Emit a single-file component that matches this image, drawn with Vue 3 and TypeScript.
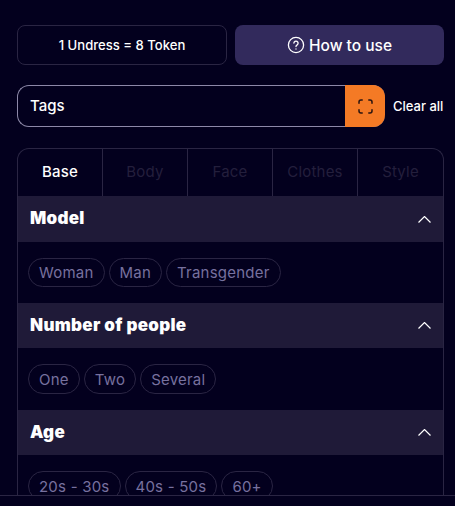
<script setup lang="ts">
interface Section { title: string; chips: string[] }
const tabs: string[] = ['Base', 'Body', 'Face', 'Clothes', 'Style']
const sections: Section[] = [
  { title: 'Model', chips: ['Woman', 'Man', 'Transgender'] },
  { title: 'Number of people', chips: ['One', 'Two', 'Several'] },
  { title: 'Age', chips: ['20s - 30s', '40s - 50s', '60+'] },
]
</script>

<template>
  <div class="page">
    <div class="top">
      <div class="price">1 Undress = 8 Token</div>
      <button class="how">
        <svg width="18" height="18" viewBox="0 0 18 18" fill="none" stroke="#fff" stroke-width="1.3" stroke-linecap="round">
          <circle cx="9" cy="9" r="7.6" />
          <path d="M6.9 7.1a2.1 2.1 0 1 1 3.3 1.8c-.8.5-1.2.9-1.2 1.7" />
          <path d="M9 12.9v.1" />
        </svg>
        How to use
      </button>
    </div>
    <div class="search">
      <div class="field">
        <span class="label">Tags</span>
        <span class="scan">
          <svg width="15" height="15" viewBox="0 0 15 15" fill="none" stroke="#2a1410" stroke-width="1.5" stroke-linecap="round" stroke-linejoin="round">
            <path d="M1 4.200V3a2 2 0 0 1 2-2h1.200M10.800 1H12a2 2 0 0 1 2 2v1.200M14 10.800V12a2 2 0 0 1-2 2h-1.200M4.200 14H3a2 2 0 0 1-2-2v-1.200" />
          </svg>
        </span>
      </div>
      <span class="clear">Clear all</span>
    </div>
    <div class="panel">
      <div class="tabs">
        <div v-for="(t, i) in tabs" :key="t" class="tab" :class="{ active: i === 0 }">{{ t }}</div>
      </div>
      <section v-for="s in sections" :key="s.title">
        <header class="head">
          <span>{{ s.title }}</span>
          <svg width="13" height="7" viewBox="0 0 13 7" fill="none" stroke="#fff" stroke-width="1.2">
            <path d="M.5 6.500l6-6 6 6" />
          </svg>
        </header>
        <div class="chips">
          <span v-for="c in s.chips" :key="c" class="chip">{{ c }}</span>
        </div>
      </section>
    </div>
    <div class="bar"></div>
  </div>
</template>

<style>
html, body { margin: 0; background: #03001e; }
</style>

<style scoped>
.page {
  position: relative;
  width: 455px;
  height: 506px;
  overflow: hidden;
  box-sizing: border-box;
  padding: 25px 11px 0 17px;
  background: #03001e;
  font-family: Inter, "Noto Sans", sans-serif;
  color: #fff;
}
.top {
  display: flex;
  gap: 8px;
  height: 40px;
}
.price, .how {
  display: flex;
  align-items: center;
  justify-content: center;
  box-sizing: border-box;
  border-radius: 8px;
}
.price {
  flex: 0 0 210px;
  border: 1px solid #2a2543;
  font-size: 13.1px;
  font-weight: 500;
}
.how {
  flex: 1 1 0;
  min-width: 0;
  gap: 4px;
  padding: 0;
  border: 0;
  background: #322a5c;
  color: #fff;
  font-family: inherit;
  font-size: 15.5px;
  font-weight: 500;
}
.search {
  display: flex;
  align-items: center;
  gap: 8px;
  margin-top: 20px;
}
.field {
  flex: 0 0 368px;
  display: flex;
  align-items: stretch;
  justify-content: space-between;
  height: 42px;
  box-sizing: border-box;
  border: 1px solid #8d88a8;
  border-right: 0;
  border-radius: 12px;
}
.label {
  align-self: center;
  padding-left: 12px;
  padding-bottom: 1px;
  font-size: 15px;
  font-weight: 500;
}
.scan {
  width: 40px;
  margin: -1px 0;
  display: flex;
  align-items: center;
  justify-content: center;
  background: #f47a25;
  border-radius: 0 12px 12px 0;
}
.clear {
  padding-bottom: 1px;
  font-size: 13px;
  font-weight: 500;
  white-space: nowrap;
}
.panel {
  margin-top: 21px;
  box-sizing: border-box;
  border: 1px solid #2a2543;
  border-bottom: 0;
  border-radius: 12px 12px 0 0;
}
.tabs {
  display: grid;
  grid-template-columns: repeat(5, 1fr);
  height: 47px;
}
.tab {
  display: flex;
  align-items: center;
  justify-content: center;
  box-sizing: border-box;
  padding-bottom: 2px;
  border-right: 1px solid #2a2543;
  color: #231f3c;
  font-size: 15px;
  letter-spacing: 0.2px;
}
.tab:last-child { border-right: 0; }
.tab.active {
  color: #fff;
  font-weight: 500;
}
.head {
  display: flex;
  align-items: center;
  justify-content: space-between;
  height: 45px;
  box-sizing: border-box;
  padding: 0 12px;
  background: #1f1a38;
  font-size: 17px;
  font-weight: 900;
  letter-spacing: 0.3px;
}
section:nth-child(2) .head { height: 46px; }
.head span {
  padding-bottom: 2px;
}
.chips {
  display: flex;
  gap: 4px;
  height: 62px;
  box-sizing: border-box;
  padding: 16px 0 0 10px;
}
section:nth-child(2) .chips { height: 61px; }
.chip {
  display: flex;
  align-items: center;
  height: 30px;
  box-sizing: border-box;
  padding: 0 10px;
  border: 1px solid #2a2543;
  border-radius: 15px;
  color: #77719f;
  font-size: 15px;
  letter-spacing: 0.22px;
}
section:nth-child(2) .chip { height: 29px; }
.bar {
  position: absolute;
  left: 0;
  right: 0;
  bottom: 0;
  height: 11px;
  box-sizing: border-box;
  border-top: 1px solid #2a2543;
  background: #03001e;
}
</style>
